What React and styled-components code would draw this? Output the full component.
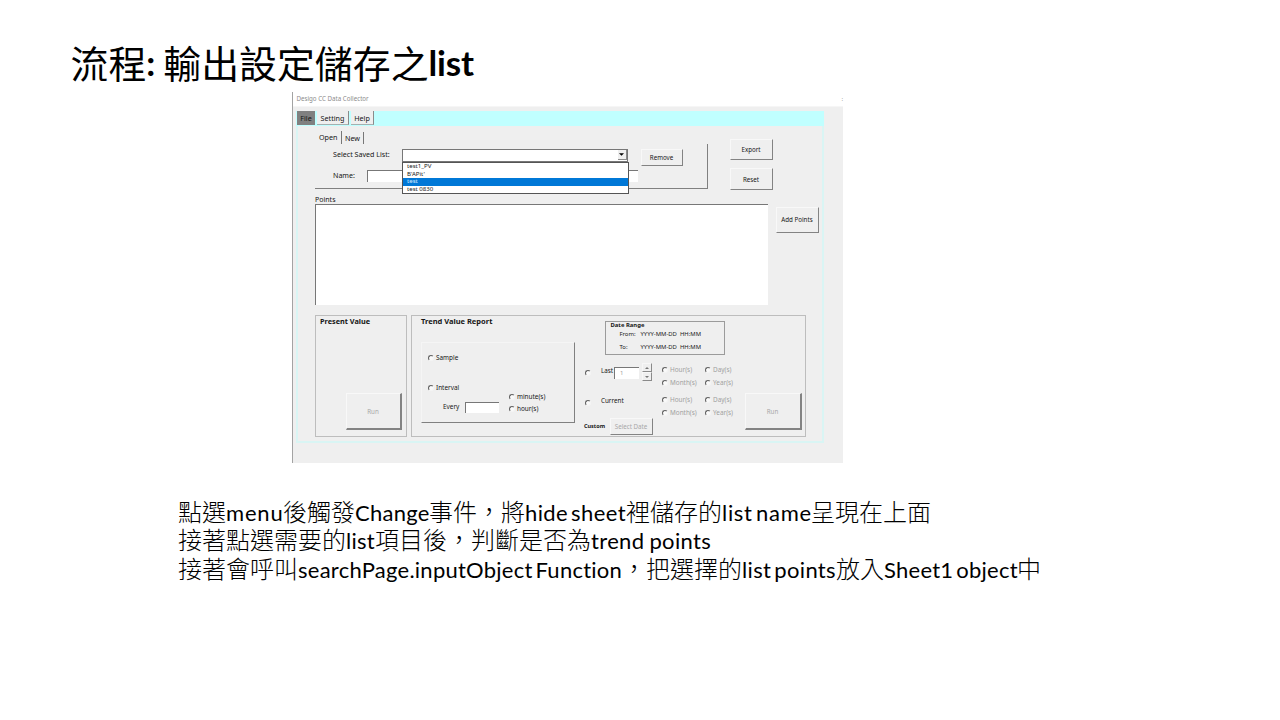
import React from "react";
import styled, { createGlobalStyle, css } from "styled-components";

const Global = createGlobalStyle`
  *, *::before, *::after { box-sizing: border-box; }
  html, body { margin: 0; padding: 0; background: #fff; }
`;

const Slide = styled.main`
  width: 1280px;
  height: 720px;
  overflow: hidden;
  background: #fff;
  color: #000;
  display: flex;
  flex-direction: column;
  align-items: flex-start;
`;

const Heading = styled.h1`
  margin: 0;
  height: 92px;
  padding: 39px 0 0 70.5px;
  font: 400 37.9px/46px "Noto Sans CJK TC", sans-serif;
  white-space: nowrap;
  display: flex;
`;

const Latin = styled.span`
  display: inline-block;
  flex: none;
  width: ${(p) => p.$w}px;
  font-family: Lato, sans-serif;
  font-size: ${(p) => p.$size || 22}px;
  font-weight: ${(p) => (p.$bold ? 700 : 400)};
  font-variant-ligatures: none;
  letter-spacing: ${(p) => p.$ls ?? 0.25}px;
  word-spacing: ${(p) => p.$ws ?? -3}px;
  white-space: pre;
`;

const Notes = styled.section`
  margin: 34px 0 0 178px;
  font: 300 24px/28.4px "Noto Sans CJK TC", sans-serif;
`;

const NoteLine = styled.p`
  margin: 0;
  height: 28.4px;
  white-space: nowrap;
  display: flex;
  align-items: baseline;
`;

const Window = styled.section`
  width: 551px;
  height: 371px;
  flex: none;
  margin-left: 292px;
  background: #efefef;
  border-left: 1px solid #a3a3a3;
  font-family: "Noto Sans", "Open Sans", sans-serif;
  color: #161616;
`;

const TitleBar = styled.header`
  height: 15px;
  background: #fff;
  border-bottom: 1px solid #f6f6f6;
  padding: 2px 0 0 3.5px;
  display: flex;
  justify-content: space-between;
  color: #8c8c8c;
`;

const Text = styled.span`
  display: block;
  flex: none;
  font-size: ${(p) => p.$size || 6.6}px;
  line-height: 10px;
  height: 10px;
  font-weight: ${(p) => (p.$bold ? 700 : 400)};
  color: ${(p) => (p.$muted ? "#a0a0a0" : "inherit")};
  white-space: pre;
  width: ${(p) => (p.$w ? p.$w + "px" : "auto")};
  margin-top: ${(p) => p.$mt || 0}px;
`;

const Frame = styled.div`
  width: 528px;
  height: 332px;
  margin: 4px 0 0 3px;
  box-shadow: inset 0 0 0 2px #d9f5f4;
`;

const MenuBar = styled.nav`
  height: 15px;
  background: #c0ffff;
  padding-left: 1px;
  display: flex;
  gap: 2px;
`;

const MenuItem = styled.div`
  width: ${(p) => p.$w}px;
  height: 14px;
  background: ${(p) => (p.$active ? "#808080" : "#efefef")};
  border-right: ${(p) => (p.$active ? 0 : 1)}px solid #8b8b8b;
  border-bottom: ${(p) => (p.$active ? 0 : 1)}px solid #a4b0b0;
  font-size: 7.2px;
  line-height: 15px;
  text-align: center;
`;

const TopArea = styled.div`
  height: 69px;
  padding: 5px 0 0 19px;
  display: flex;
`;

const Tabs = styled.div`
  height: 13px;
  padding-left: 3px;
  display: flex;
  align-items: flex-end;
`;

const Tab = styled.div`
  width: ${(p) => p.$w}px;
  height: ${(p) => p.$h}px;
  padding-left: ${(p) => p.$pad || 0}px;
  border-right: 1px solid #777;
  font-size: 7.2px;
  line-height: 12px;
`;

const TabPanel = styled.div`
  width: 393px;
  height: 45px;
  border-right: 1px solid #808080;
  border-bottom: 1px solid #808080;
  padding: 5px 0 0 18px;
`;

const FormRow = styled.div`
  display: flex;
  height: ${(p) => p.$h}px;
`;

const sunken = css`
  background: #fff;
  border-top: 1px solid #777;
  border-left: 1px solid #777;
`;

const Field = styled.div`
  ${sunken}
  flex: none;
  width: ${(p) => p.$w}px;
  height: ${(p) => p.$h}px;
  padding-left: 5px;
`;

const Combo = styled.div`
  position: relative;
  width: 226px;
  height: 13px;
  border: 1px solid #777;
  background: #fff;
  display: flex;
  justify-content: flex-end;
`;

const ComboArrow = styled.div`
  width: 9px;
  height: 10px;
  background: #efefef;
  border-right: 1px solid #8b8b8b;
  border-bottom: 1px solid #8b8b8b;
  display: flex;
  align-items: center;
  justify-content: center;
`;

const Options = styled.ul`
  position: absolute;
  z-index: 1;
  left: -1px;
  top: 12px;
  width: 227px;
  height: 32px;
  margin: 0;
  padding: 0;
  list-style: none;
  border: 1px solid #555;
  background: #fff;
`;

const Option = styled.li`
  height: 7.5px;
  padding-left: 4.5px;
  font-size: 6.1px;
  line-height: 6.6px;
  background: ${(p) => (p.$selected ? "#0078d7" : "transparent")};
  color: ${(p) => (p.$selected ? "#d8ecff" : "#161616")};
`;

const Button = styled.div`
  flex: none;
  width: ${(p) => p.$w}px;
  height: ${(p) => p.$h}px;
  margin: ${(p) => p.$m || 0};
  padding-right: 1px;
  padding-bottom: ${(p) => p.$pb ?? 1}px;
  border: 1px solid #f8f8f8;
  border-right: ${(p) => p.$edge || 1}px solid #838383;
  border-bottom: ${(p) => p.$edge || 1}px solid #838383;
  display: flex;
  align-items: center;
  justify-content: center;
  font-size: 6.2px;
  color: ${(p) => (p.$muted ? "#a8a8a8" : "inherit")};
  white-space: nowrap;
`;

const Actions = styled.div`
  padding-top: 8px;
  margin-left: 22px;
  display: flex;
  flex-direction: column;
  gap: 8px;
`;

const Points = styled.div`
  padding-left: 19px;
`;

const PointsRow = styled.div`
  display: flex;
`;

const PointList = styled.div`
  ${sunken}
  width: 453px;
  height: 101px;
`;

const Groups = styled.div`
  display: flex;
  gap: 4px;
  margin-top: 10px;
  padding-left: 19px;
`;

const Group = styled.div`
  width: ${(p) => p.$w}px;
  height: 122px;
  border: 1px solid #bdbdbd;
  padding: ${(p) => p.$pad};
  display: flex;
`;

const Column = styled.div`
  display: flex;
  flex-direction: column;
  flex: none;
  width: ${(p) => (p.$w ? p.$w + "px" : "auto")};
  margin-left: ${(p) => p.$ml || 0}px;
  padding-top: ${(p) => p.$pt || 0}px;
`;

const IntervalPanel = styled.div`
  width: 154px;
  height: 81px;
  margin-top: 16px;
  border: 1px solid #f5f5f5;
  border-right: 1px solid #808080;
  border-bottom: 1px solid #808080;
  padding: 9px 0 0 6px;
`;

const RadioRow = styled.div`
  display: flex;
  align-items: center;
  gap: 2px;
  height: ${(p) => p.$h || 12}px;
`;

const Circle = styled.i`
  flex: none;
  width: 6px;
  height: 6px;
  border-radius: 50%;
  background: #fafafa;
  border: 1px solid;
  border-color: #606060 #f4f4f4 #f4f4f4 #606060;
`;

const IntervalRow = styled.div`
  display: flex;
  padding-left: 15px;
`;

const DateRange = styled.div`
  width: 120px;
  height: 34px;
  border: 1px solid #9b9b9b;
  margin-left: 21px;
  padding-left: 4.5px;
`;

const DateLine = styled.div`
  display: flex;
  padding-left: 9px;
  margin-bottom: ${(p) => p.$mb || 0}px;
`;

const RangeRow = styled.div`
  display: flex;
  height: 30px;
`;

const Spinner = styled.div`
  width: 10px;
  height: 18px;
  margin-left: 3px;
  display: grid;
  grid-template-rows: 1fr 1fr;
`;

const SpinButton = styled.div`
  border: 1px solid #f7f7f7;
  border-right-color: #8a8a8a;
  border-bottom-color: #8a8a8a;
  display: flex;
  align-items: center;
  justify-content: center;
`;

const UnitGrid = styled.div`
  display: grid;
  grid-template-columns: 43px 32px;
  grid-template-rows: 13px 13px;
`;

const Arrow = ({ up, size = 3, color = "#777" }) => (
  <svg width={size + 1} height={size - 1} viewBox="0 0 4 2">
    <path d={up ? "M0 2 2 0 4 2Z" : "M0 0 2 2 4 0Z"} fill={color} />
  </svg>
);

const Radio = ({ label, muted, size = 6.4, h }) => (
  <RadioRow $h={h}>
    <Circle />
    {label && (
      <Text $size={size} $muted={muted}>
        {label}
      </Text>
    )}
  </RadioRow>
);

const Units = () => (
  <UnitGrid>
    <Radio label="Hour(s)" muted />
    <Radio label="Day(s)" muted />
    <Radio label="Month(s)" muted />
    <Radio label="Year(s)" muted />
  </UnitGrid>
);

const Collector = () => (
  <Window>
    <TitleBar>
      <Text $size={6.2}>Desigo CC Data Collector</Text>
      <Text $size={6}>:</Text>
    </TitleBar>
    <Frame>
      <MenuBar>
        <MenuItem $w={18} $active>File</MenuItem>
        <MenuItem $w={32}>Setting</MenuItem>
        <MenuItem $w={23}>Help</MenuItem>
      </MenuBar>
      <TopArea>
        <div>
          <Tabs>
            <Tab $w={24} $h={13} $pad={1}>Open</Tab>
            <Tab $w={22} $h={12} $pad={3}>New</Tab>
          </Tabs>
          <TabPanel>
            <FormRow $h={21}>
              <Text $w={68.5} $size={7.1}>Select Saved List:</Text>
              <Combo>
                <ComboArrow>
                  <Arrow size={4} color="#000" />
                </ComboArrow>
                <Options>
                  <Option>test1_PV</Option>
                  <Option>B'APit'</Option>
                  <Option $selected>test</Option>
                  <Option>test 0830</Option>
                </Options>
              </Combo>
              <Button $w={42} $h={17} $m="0 0 0 13.5px">Remove</Button>
            </FormRow>
            <FormRow $h={14}>
              <Text $w={34} $size={7.1}>Name:</Text>
              <Field $w={271} $h={12} />
            </FormRow>
          </TabPanel>
        </div>
        <Actions>
          <Button $w={43} $h={21}>Export</Button>
          <Button $w={43} $h={22} $pb={0}>Reset</Button>
        </Actions>
      </TopArea>
      <Points>
        <FormRow $h={9}>
          <Text $size={7}>Points</Text>
        </FormRow>
        <PointsRow>
          <PointList />
          <Button $w={43} $h={26} $m="3px 0 0 8px">Add Points</Button>
        </PointsRow>
      </Points>
      <Groups>
        <Group $w={92} $pad="0 0 0 4px">
          <Column>
            <Text $bold $size={7.3}>Present Value</Text>
            <Button $w={56} $h={37} $edge={2} $pb={0} $m="67px 0 0 26px" $muted>Run</Button>
          </Column>
        </Group>
        <Group $w={395} $pad="0 0 0 9px">
          <Column $w={154}>
            <Text $bold $size={7.5}>Trend Value Report</Text>
            <IntervalPanel>
              <Radio label="Sample" h={12} />
              <RadioRow $h={18} />
              <Radio label="Interval" h={12} />
              <IntervalRow>
                <Column $w={22} $pt={8}>
                  <Text $size={6.4}>Every</Text>
                </Column>
                <Column $w={44} $pt={8}>
                  <Field $w={34} $h={11} />
                </Column>
                <Column>
                  <Radio label="minute(s)" h={5} />
                  <RadioRow $h={4} />
                  <Radio label="hour(s)" h={12} />
                </Column>
              </IntervalRow>
            </IntervalPanel>
          </Column>
          <Column $ml={9} $pt={5}>
            <DateRange>
              <FormRow $h={7}>
                <Text $bold $size={5.9} $mt={-2}>Date Range</Text>
              </FormRow>
              <DateLine $mb={3}>
                <Text $w={21} $size={5.9}>From:</Text>
                <Text $size={5.9}>YYYY-MM-DD  HH:MM</Text>
              </DateLine>
              <DateLine>
                <Text $w={21} $size={5.9}>To:</Text>
                <Text $size={5.9}>YYYY-MM-DD  HH:MM</Text>
              </DateLine>
            </DateRange>
            <RangeRow>
              <Column $w={16} $ml={1} $pt={12}>
                <Radio />
              </Column>
              <Column $w={13} $pt={11}>
                <Text $size={6.3}>Last</Text>
              </Column>
              <Column $pt={12}>
                <Field $w={25} $h={12}>
                  <Text $size={6} $muted>1</Text>
                </Field>
              </Column>
              <Column $pt={8}>
                <Spinner>
                  <SpinButton><Arrow up /></SpinButton>
                  <SpinButton><Arrow /></SpinButton>
                </Spinner>
              </Column>
              <Column $ml={10} $pt={9}>
                <Units />
              </Column>
            </RangeRow>
            <RangeRow>
              <Column $w={16} $ml={1} $pt={12}>
                <Radio />
              </Column>
              <Column $w={61} $pt={11}>
                <Text $size={6.3}>Current</Text>
              </Column>
              <Column $pt={9}>
                <Units />
              </Column>
            </RangeRow>
            <FormRow $h={20}>
              <Column $w={26} $pt={6}>
                <Text $bold $size={5.5}>Custom</Text>
              </Column>
              <Button $w={43} $h={17} $muted $m="3px 0 0 0">Select Date</Button>
            </FormRow>
          </Column>
          <Button $w={57} $h={37} $edge={2} $pb={0} $m="77px 0 0 8px" $muted>Run</Button>
        </Group>
      </Groups>
    </Frame>
  </Window>
);

export default function App() {
  return (
    <Slide>
      <Global />
      <Heading>
        流程
        <Latin $w={17} $size={35} $bold $ls={0}>:</Latin>
        輸出設定儲存之
        <Latin $w={46} $size={35} $bold $ls={-0.2}>list</Latin>
      </Heading>
      <Collector />
      <Notes>
        <NoteLine>
          點選<Latin $w={57} $ls={0.8}>menu</Latin>後觸發<Latin $w={74}>Change</Latin>事件，將
          <Latin $w={101} $ls={0.4}>hide sheet</Latin>裡儲存的<Latin $w={89} $ls={0.7}>list name</Latin>呈現在上面
        </NoteLine>
        <NoteLine>
          接著點選需要的<Latin $w={29}>list</Latin>項目後，判斷是否為
          <Latin $w={121} $ws={-1} $ls={0.35}>trend points</Latin>
        </NoteLine>
        <NoteLine>
          接著會呼叫<Latin $w={324}>searchPage.inputObject Function</Latin>，把選擇的
          <Latin $w={94} $ls={0.35}>list points</Latin>放入<Latin $w={133}>Sheet1 object</Latin>中
        </NoteLine>
      </Notes>
    </Slide>
  );
}
